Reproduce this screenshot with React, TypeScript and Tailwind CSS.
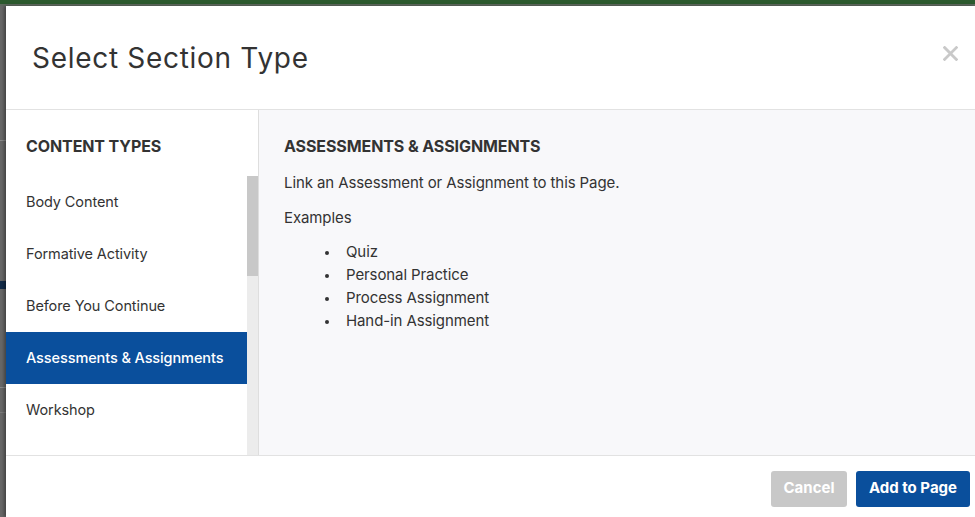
import { useState } from 'react';

const contentTypes = [
  'Body Content',
  'Formative Activity',
  'Before You Continue',
  'Assessments & Assignments',
  'Workshop',
  'Video',
];

const examples = ['Quiz', 'Personal Practice', 'Process Assignment', 'Hand-in Assignment'];

export default function App() {
  const [selected, setSelected] = useState('Assessments & Assignments');

  return (
    <div
      className="flex h-[517px] w-[975px] flex-col overflow-hidden bg-[#666666] text-[#333333]"
      style={{ fontFamily: 'Inter, Lato, Arial, sans-serif' }}
    >
      {/* page header behind the overlay */}
      <div className="h-[4px] shrink-0 bg-[#2c5a2e]" />
      <div className="h-[2px] shrink-0 bg-[#5e6a5e]" />

      <div className="flex min-h-0 flex-1">
        {/* dimmed page edge */}
        <div className="flex w-[6px] shrink-0 flex-col bg-[#676767]">
          <div className="mt-[134px] h-px bg-[#8a8a8a]" />
          <div className="mt-[140px] h-[8px] bg-[#132b48]" />
          <div className="mt-[98px] h-px bg-[#8a8a8a]" />
          <div className="mt-[24px] h-px bg-[#7a7a7a]" />
        </div>

        <div className="flex min-w-0 flex-1 flex-col bg-white shadow-[-2px_0_3px_rgba(0,0,0,0.35)]">
          {/* title */}
          <div className="flex h-[104px] shrink-0 items-center justify-between border-b border-[#e2e2e2] pl-[26px] pr-[17px]">
            <h1 className="text-[28px] font-normal tracking-[0.7px] text-[#333333]">Select Section Type</h1>
            <button className="mb-[9px] text-[#c9c9c9]">
              <svg width="15" height="15" viewBox="0 0 14 14" fill="none">
                <path d="M1.5 1.5l11 11M12.5 1.5l-11 11" stroke="currentColor" strokeWidth="2.6" strokeLinecap="square" />
              </svg>
            </button>
          </div>

          <div className="flex min-h-0 flex-1">
            {/* sidebar */}
            <div className="flex w-[253px] shrink-0 flex-col border-r border-[#dedede]">
              <div className="flex h-[66px] shrink-0 items-center pl-[20px] pt-[5px] text-[16px] font-bold tracking-[-0.1px] text-[#333333]">
                CONTENT TYPES
              </div>
              <div className="flex min-h-0 flex-1">
                <ul className="flex-1 overflow-hidden">
                  {contentTypes.map((t) => (
                    <li key={t}>
                      <button
                        onClick={() => setSelected(t)}
                        className={
                          'flex h-[52px] w-full items-center pl-[20px] text-left text-[14.5px] tracking-[-0.1px] ' +
                          (selected === t ? 'bg-[#0a4f9c] font-medium text-white' : 'text-[#333333]')
                        }
                      >
                        {t}
                      </button>
                    </li>
                  ))}
                </ul>
                <div className="flex w-[11px] shrink-0 flex-col bg-[#ececec]">
                  <div className="h-[100px] bg-[#c8c8c8]" />
                </div>
              </div>
            </div>

            {/* description */}
            <div className="flex-1 bg-[#f8f8fa] pl-[25px] pt-[24px] text-[15px] tracking-[-0.1px]">
              <h2 className="text-[16px] font-bold tracking-[-0.1px] text-[#333333]">ASSESSMENTS &amp; ASSIGNMENTS</h2>
              <p className="mt-[14px]">Link an Assessment or Assignment to this Page.</p>
              <p className="mt-[12px]">Examples</p>
              <ul className="mt-[11px] list-disc pl-[56px] leading-[23px] marker:text-[12px]">
                {examples.map((e) => (
                  <li key={e} className="pl-[6px]">{e}</li>
                ))}
              </ul>
            </div>
          </div>

          {/* actions */}
          <div className="flex h-[62px] shrink-0 items-center justify-end gap-[9px] border-t border-[#e2e2e2] pr-[5px] pt-[4px]">
            <button className="h-[36px] w-[76px] rounded-[3px] bg-[#c8c8c8] text-[15px] font-bold text-white">Cancel</button>
            <button className="h-[36px] w-[114px] rounded-[3px] bg-[#0a4f9c] text-[15px] font-bold text-white">Add to Page</button>
          </div>
        </div>
      </div>
    </div>
  );
}
